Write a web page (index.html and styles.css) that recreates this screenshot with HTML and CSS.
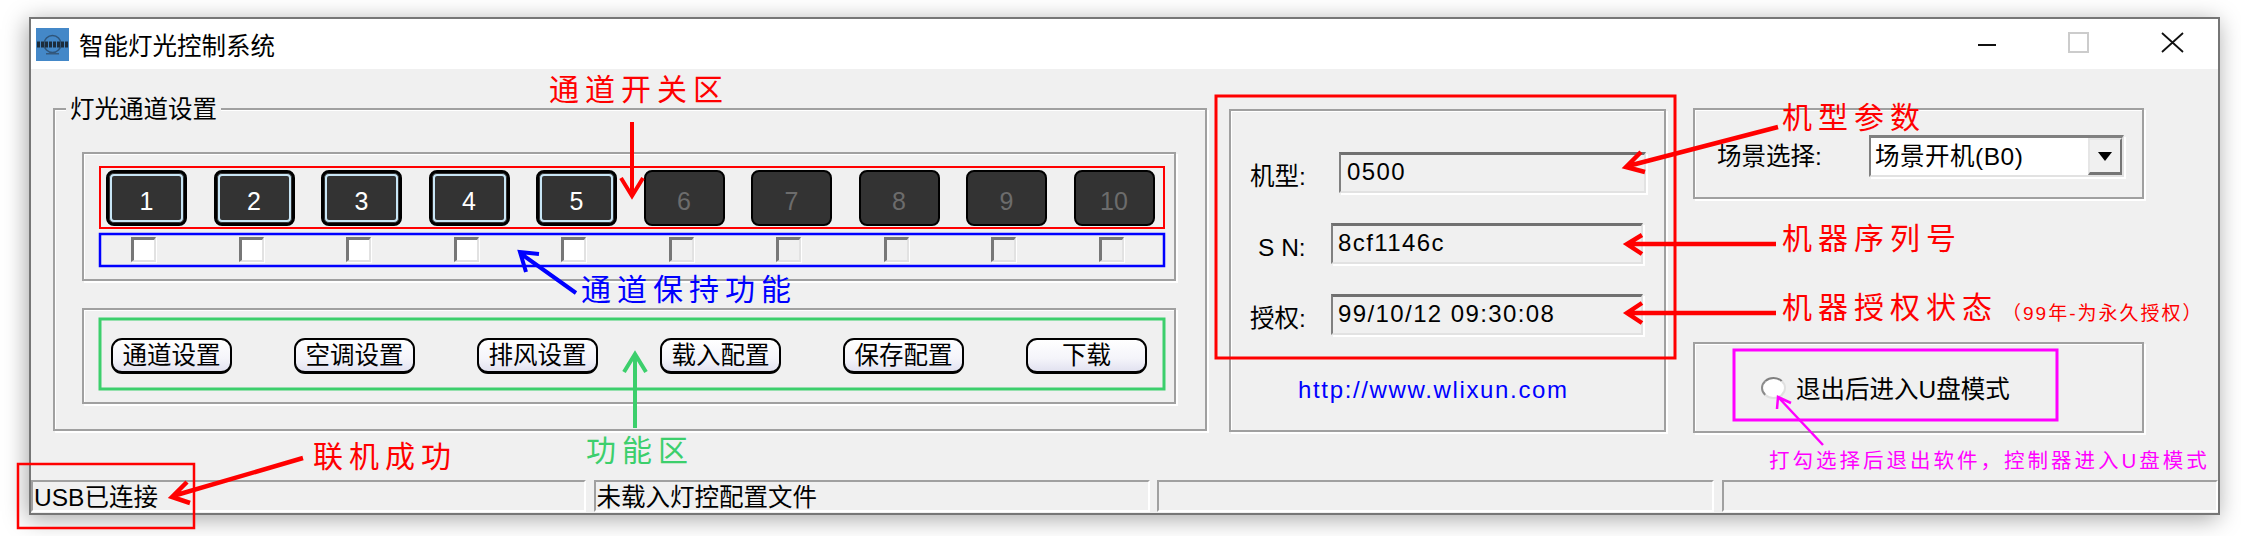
FILE: index.html
```html
<!DOCTYPE html>
<html lang="zh-CN">
<head>
  <meta charset="UTF-8">
  <title>智能灯光控制系统</title>
  <link rel="stylesheet" href="styles.css">
</head>
<body>
  <div class="shot">
    <div class="window">
      <div class="titlebar">
        <svg class="app-icon" width="33" height="33" viewBox="0 0 33 33">
          <rect width="33" height="33" fill="#4488c8"/>
          <circle cx="16.5" cy="16" r="8.5" fill="none" stroke="#2f557a" stroke-width="1.5"/>
          <path d="M1 16.5H32" stroke="#1c2c3c" stroke-width="6" stroke-dasharray="3 1"/>
          <rect x="10" y="25" width="13" height="1.5" fill="#35597c"/>
        </svg>
        <span class="app-title">智能灯光控制系统</span>
        <div class="win-controls">
          <span class="win-min"></span>
          <span class="win-max"></span>
          <svg class="win-close" width="23" height="21" viewBox="0 0 23 21">
            <path d="M1 1L22 20M22 1L1 20" fill="none" stroke="#111" stroke-width="1.8"/>
          </svg>
        </div>
      </div>

      <div class="client">
        <div class="main">
          <div class="group group-channels">
            <span class="group-title">灯光通道设置</span>
            <div class="group channel-box">
              <div class="channel-row">
                <button class="channel on">1</button>
                <button class="channel on">2</button>
                <button class="channel on">3</button>
                <button class="channel on">4</button>
                <button class="channel on">5</button>
                <button class="channel">6</button>
                <button class="channel">7</button>
                <button class="channel">8</button>
                <button class="channel">9</button>
                <button class="channel">10</button>
              </div>
              <div class="channel-row hold-row">
                <input type="checkbox" class="hold">
                <input type="checkbox" class="hold">
                <input type="checkbox" class="hold">
                <input type="checkbox" class="hold">
                <input type="checkbox" class="hold">
                <input type="checkbox" class="hold off">
                <input type="checkbox" class="hold off">
                <input type="checkbox" class="hold off">
                <input type="checkbox" class="hold off">
                <input type="checkbox" class="hold off">
              </div>
            </div>
            <div class="group action-box">
              <button class="action">通道设置</button>
              <button class="action">空调设置</button>
              <button class="action">排风设置</button>
              <button class="action">载入配置</button>
              <button class="action">保存配置</button>
              <button class="action">下载</button>
            </div>
          </div>

          <div class="group group-info">
            <div class="info-row row-model">
              <span class="info-label">机型:</span>
              <div class="info-value">0500</div>
            </div>
            <div class="info-row">
              <span class="info-label label-sn">S N:</span>
              <div class="info-value">8cf1146c</div>
            </div>
            <div class="info-row">
              <span class="info-label">授权:</span>
              <div class="info-value">99/10/12 09:30:08</div>
            </div>
            <div class="site-link">http://www.wlixun.com</div>
          </div>

          <div class="side">
            <div class="group group-scene">
              <span class="scene-label">场景选择:</span>
              <div class="combo">
                <span class="combo-text">场景开机(B0)</span>
                <span class="combo-btn"><i class="combo-arrow"></i></span>
              </div>
            </div>
            <div class="group group-udisk">
              <input type="radio" class="radio">
              <span>退出后进入U盘模式</span>
            </div>
          </div>
        </div>

        <div class="statusbar">
          <div class="pane">USB已连接</div>
          <div class="pane">未载入灯控配置文件</div>
          <div class="pane"></div>
          <div class="pane"></div>
        </div>
      </div>
    </div>

    <!-- annotations drawn on top of the screenshot -->
    <svg class="marks" width="2241" height="536" viewBox="0 0 2241 536" fill="none">
      <rect x="100" y="167" width="1064" height="61" stroke="#ff0000" stroke-width="2"/>
      <rect x="100" y="234" width="1064" height="32" stroke="#0000ff" stroke-width="2.5"/>
      <rect x="100" y="319" width="1064" height="70" stroke="#3ccf6c" stroke-width="3"/>
      <rect x="1216" y="96" width="459" height="262" stroke="#ff0000" stroke-width="3"/>
      <rect x="1734" y="350" width="323" height="70" stroke="#ff00ff" stroke-width="3"/>
      <rect x="18" y="464" width="176" height="64" stroke="#ff0000" stroke-width="2.5"/>

      <g stroke="#ff0000" stroke-width="4">
        <path d="M632 122V196M621 178L632 196L643 178"/>
        <path d="M303 458L173 496M187 482L172 497L190 503" stroke-width="4.5"/>
        <path d="M1778 127L1628 166M1641 152L1626 167L1645 172" stroke-width="4.5"/>
        <path d="M1776 244H1628M1642 235L1627 244L1642 254" stroke-width="4.5"/>
        <path d="M1776 313H1628M1642 303L1627 313L1642 323" stroke-width="4.5"/>
      </g>
      <path d="M576 293L520 253M539 254L520 252L526 272" stroke="#0000ff" stroke-width="4"/>
      <path d="M635 428V356M624 372L635 354L646 372" stroke="#3ccf6c" stroke-width="4"/>
      <path d="M1823 445L1779 398M1791 403L1778 397L1777 409" stroke="#ff00ff" stroke-width="2.5"/>
    </svg>

    <span class="note note-red note-switch">通道开关区</span>
    <span class="note note-blue note-hold">通道保持功能</span>
    <span class="note note-green note-func">功能区</span>
    <span class="note note-red note-online">联机成功</span>
    <span class="note note-red note-model">机型参数</span>
    <span class="note note-red note-serial">机器序列号</span>
    <span class="note note-red note-auth">机器授权状态</span>
    <span class="note note-red note-auth-sub">（99年-为永久授权）</span>
    <span class="note note-pink note-udisk">打勾选择后退出软件，控制器进入U盘模式</span>
  </div>
</body>
</html>
```

FILE: styles.css
```css
html, body {
  margin: 0;
  padding: 0;
  background: #fff;
}

.shot {
  position: relative;
  width: 2241px;
  height: 536px;
  overflow: hidden;
  padding: 17px 0 0 29px;
  box-sizing: border-box;
  font-family: "Liberation Sans", "Noto Sans CJK SC", sans-serif;
  font-size: 24.5px;
  color: #000;
}

.window {
  width: 2191px;
  height: 498px;
  box-sizing: border-box;
  border: 2px solid #767676;
  background: #f0f0f0;
  display: flex;
  flex-direction: column;
  box-shadow: -2px 4px 22px rgba(0, 0, 0, 0.35);
}

/* title bar */
.titlebar {
  height: 50px;
  background: #fff;
  display: flex;
  align-items: center;
  padding: 0 34px 0 5px;
  flex-shrink: 0;
}

.app-icon {
  margin-right: 10px;
}

.win-controls {
  margin-left: auto;
  display: flex;
  align-items: center;
  gap: 72px;
}

.win-min {
  width: 18px;
  height: 2px;
  background: #111;
  margin-top: 2px;
}

.win-max {
  width: 21px;
  height: 21px;
  box-sizing: border-box;
  border: 2px solid #ccc;
  margin-top: -4px;
}

.win-close {
  margin-top: -4px;
}

/* client area */
.client {
  flex: 1;
  display: flex;
  flex-direction: column;
}

.main {
  display: flex;
  align-items: flex-start;
  padding: 39px 0 0 22px;
}

.group {
  position: relative;
  box-sizing: border-box;
  border: 2px solid #a0a0a0;
  box-shadow: inset 1px 1px 0 #fff, 2px 2px 0 #fff;
}

.group-title {
  position: absolute;
  top: -13px;
  left: 11px;
  padding: 0 4px;
  background: #f0f0f0;
  line-height: 26px;
}

.group-channels {
  width: 1154px;
  height: 323px;
  padding: 42px 0 0 27px;
  margin-right: 22px;
}

.channel-box {
  width: 1094px;
  height: 129px;
  padding: 16px 0 0 22px;
  margin-bottom: 27px;
}

.channel-row {
  display: grid;
  grid-template-columns: repeat(10, 81px);
  column-gap: 26.5px;
}

.hold-row {
  margin-top: 11px;
}

.channel {
  height: 56px;
  padding: 6px 0 0;
  box-sizing: border-box;
  border: 2px solid #000;
  border-radius: 8px;
  background: #333;
  color: #6c6c6c;
  font-family: inherit;
  font-size: 25px;
}

.channel.on {
  border-width: 3px;
  color: #fff;
  box-shadow: inset 0 0 0 1px #333, inset 0 0 0 3px #c8e6f6;
}

.hold {
  appearance: none;
  margin: 0 0 0 25px;
  width: 25px;
  height: 25px;
  box-sizing: border-box;
  border-style: solid;
  border-width: 3px 2px 2px 3px;
  border-color: #777 #e2e2e2 #e2e2e2 #777;
  background: #fff;
  box-shadow: 1px 1px 0 #fff;
}

.hold.off {
  background: #f0f0f0;
}

.action-box {
  width: 1094px;
  height: 96px;
  padding: 28px 0 0 27px;
  display: flex;
  gap: 62px;
}

.action {
  width: 121px;
  height: 36px;
  padding: 1px 0 0;
  box-sizing: border-box;
  border: 2px solid #000;
  border-bottom-width: 3px;
  border-radius: 11px;
  background: linear-gradient(#fff, #f4f4fa 60%, #e2e2f0);
  color: #000;
  font-family: inherit;
  font-size: 24.5px;
  line-height: 30px;
}

/* machine info */
.group-info {
  width: 437px;
  height: 323px;
  padding: 41px 0 0 19px;
  margin: 1px 27px 0 0;
}

.info-row {
  display: flex;
  align-items: center;
  margin-bottom: 30px;
}

.info-label {
  width: 81px;
  flex-shrink: 0;
  padding-top: 3px;
}

.label-sn {
  width: 73px;
  margin-left: 8px;
  padding-top: 9px;
}

.info-value {
  width: 312px;
  height: 41px;
  box-sizing: border-box;
  border-style: solid;
  border-width: 3px 2px 2px 2px;
  border-color: #707070 #e2e2e2 #e2e2e2 #808080;
  box-shadow: 2px 2px 0 #fff;
  padding-left: 5px;
  font-size: 24px;
  letter-spacing: 1.4px;
  line-height: 34px;
}

.row-model .info-label {
  width: 89px;
}

.row-model .info-value {
  width: 307px;
  padding-left: 6px;
}

.site-link {
  margin: 40px 0 0 48px;
  color: #0000ff;
  font-size: 24px;
  letter-spacing: 1.65px;
  line-height: 30px;
}

/* right column */
.side {
  width: 451px;
  height: 325px;
  display: flex;
  flex-direction: column;
  justify-content: space-between;
}

.group-scene {
  height: 91px;
  padding: 25px 0 0 22px;
  display: flex;
  align-items: flex-start;
}

.scene-label {
  width: 152px;
  padding-top: 2px;
}

.combo {
  width: 255px;
  height: 42px;
  box-sizing: border-box;
  border-style: solid;
  border-width: 3px 2px 2px 2px;
  border-color: #808080 #e2e2e2 #e2e2e2 #808080;
  box-shadow: 2px 2px 0 #fff;
  background: #fff;
  display: flex;
  justify-content: space-between;
  padding-left: 4px;
}

.combo-text {
  line-height: 38px;
  letter-spacing: 0.5px;
}

.combo-btn {
  width: 34px;
  box-sizing: border-box;
  background: #f0f0f0;
  border-style: solid;
  border-width: 2px 2px 3px 2px;
  border-color: #e6e6e6 #757575 #757575 #e6e6e6;
  display: flex;
  align-items: center;
  justify-content: center;
}

.combo-arrow {
  border-top: 9px solid #000;
  border-left: 7px solid transparent;
  border-right: 7px solid transparent;
}

.group-udisk {
  height: 91px;
  padding-left: 66px;
  display: flex;
  align-items: center;
  gap: 10px;
}

.radio {
  appearance: none;
  margin: 0;
  width: 25px;
  height: 22px;
  box-sizing: border-box;
  border-radius: 50%;
  border-style: solid;
  border-width: 2px;
  border-color: #808080 #e0e0e0 #e0e0e0 #8c8c8c;
  background: #fff;
}

/* status bar */
.statusbar {
  margin-top: auto;
  padding-bottom: 1px;
  display: grid;
  grid-template-columns: 555px 556px 557px 496px;
  column-gap: 7.5px;
}

.pane {
  height: 32px;
  box-sizing: border-box;
  border-style: solid;
  border-width: 2px;
  border-color: #a0a0a0 #fff #fff #a0a0a0;
  padding-left: 1px;
  line-height: 31px;
  white-space: nowrap;
}

/* annotations */
.marks {
  position: absolute;
  top: 0;
  left: 0;
}

.note {
  position: absolute;
  font-size: 30px;
  line-height: 30px;
  white-space: nowrap;
  letter-spacing: 6px;
}

.note-red { color: #ff0000; }
.note-blue { color: #0000ff; }
.note-green { color: #3ccf6c; }
.note-pink { color: #ff00ff; }

.note-switch { left: 549px; top: 75px; }
.note-hold { left: 581px; top: 275px; }
.note-func { left: 586px; top: 436px; }
.note-online { left: 313px; top: 442px; }
.note-model { left: 1782px; top: 103px; }
.note-serial { left: 1782px; top: 224px; }
.note-auth { left: 1782px; top: 293px; }

.note-auth-sub {
  left: 2002px;
  top: 299px;
  font-size: 19px;
  letter-spacing: 2px;
}

.note-udisk {
  left: 1769px;
  top: 446px;
  font-size: 20.5px;
  letter-spacing: 3px;
}
```
